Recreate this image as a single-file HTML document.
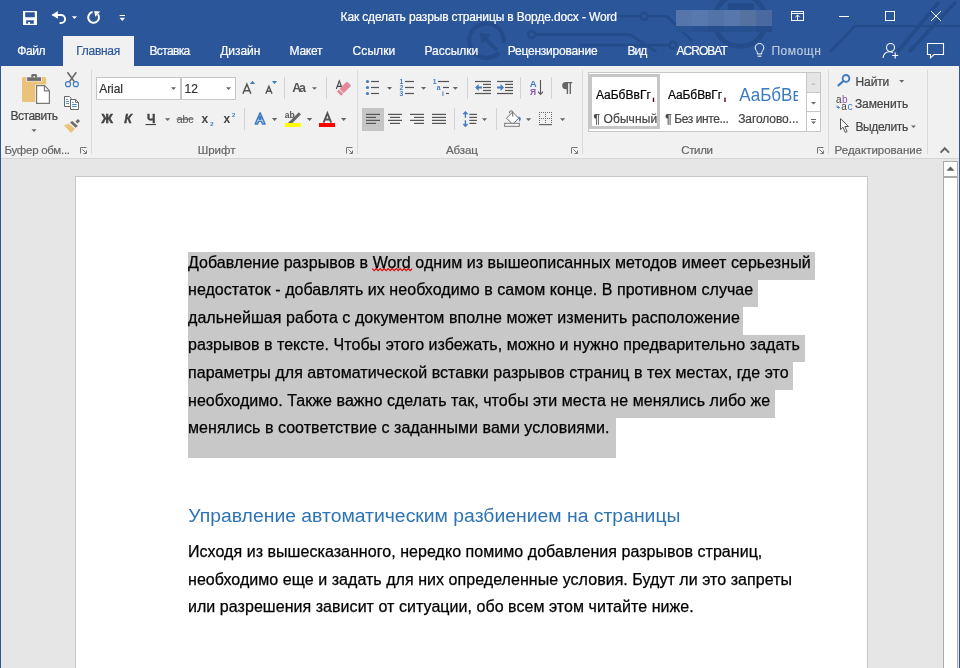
<!DOCTYPE html>
<html><head><meta charset="utf-8">
<style>
html,body{margin:0;padding:0;}
body{width:960px;height:668px;position:relative;overflow:hidden;background:#E6E6E6;font-family:"Liberation Sans",sans-serif;}
.a{position:absolute;}
#title{left:0;top:0;width:960px;height:66px;background:#2B579A;}
#ribbon{left:1px;top:66px;width:958px;height:92px;background:#F1F1F1;}
#rbb{left:1px;top:158px;width:958px;height:1px;background:#D5D5D5;}
#lb{left:0;top:66px;width:1px;height:602px;background:#2B579A;}
#rb{left:959px;top:66px;width:1px;height:602px;background:#2B579A;}
#page{left:75px;top:176px;width:791px;height:500px;background:#fff;border:1px solid #C6C6C6;}
.hl{position:absolute;background:#C8C8C8;left:188px;}
svg{position:absolute;left:0;top:0;will-change:transform;}
text{font-family:"Liberation Sans",sans-serif;white-space:pre;}
</style></head><body>
<div id="title" class="a"></div>
<div id="ribbon" class="a"></div>
<div id="rbb" class="a"></div>
<div id="lb" class="a"></div>
<div id="rb" class="a"></div>
<div id="page" class="a"></div>
<!-- scrollbar -->
<div class="a" style="left:943px;top:161px;width:13px;height:520px;background:#fff;border:1px solid #ABABAB;"></div>
<div class="a" style="left:944px;top:176px;width:13px;height:2px;background:#ABABAB;"></div>
<!-- highlights -->
<div class="hl" style="top:252px;width:627px;height:28px;"></div>
<div class="hl" style="top:280px;width:570px;height:27px;"></div>
<div class="hl" style="top:307px;width:555px;height:28px;"></div>
<div class="hl" style="top:335px;width:617px;height:27px;"></div>
<div class="hl" style="top:362px;width:605px;height:28px;"></div>
<div class="hl" style="top:390px;width:587px;height:28px;"></div>
<div class="hl" style="top:418px;width:428px;height:40px;"></div>
<!-- active tab -->
<div class="a" style="left:63px;top:36px;width:71px;height:30px;background:#F1F1F1;"></div>
<svg width="960" height="668" viewBox="0 0 960 668">
<g stroke="#254C8A" stroke-width="2.6" fill="none">
<path d="M617,16.3 H640.7 M647.7,16.3 H667 L692,41"/>
<circle cx="644.2" cy="16.3" r="3.5"/>
<path d="M535.2,34.6 H630 L656.3,51.7"/>
<circle cx="531.7" cy="34.6" r="3.5"/>
<path d="M579,45.1 H669.5"/>
<circle cx="673" cy="45.1" r="3.5"/>
<path d="M829.8,52 L854.8,26 H960"/>
</g>
<g stroke="#254C8A" stroke-width="3.6" fill="none">
<circle cx="740" cy="20.5" r="25.8" stroke-width="5"/>
<path d="M499,52.5 A17.2,17.2 0 1 1 503.5,43" stroke-width="4.2"/>
<path d="M897.5,52 L939,2 M909,52 L955.8,2"/>
<path d="M497,50 L485,38" stroke-width="4"/>
</g>
<path d="M479.5,32.5 L491,34.5 L481.5,44 Z" fill="#254C8A"/>
<rect x="728" y="3" width="26" height="9" fill="#254C8A"/>

<rect x="676" y="10" width="16" height="16" fill="#5676AB"/>
<rect x="692" y="10" width="16" height="16" fill="#5879B0"/>
<rect x="708" y="10" width="16" height="16" fill="#5273A7"/>
<rect x="724" y="10" width="16" height="16" fill="#5878AD"/>
<rect x="740" y="10" width="16" height="16" fill="#54719F"/>
<rect x="756" y="10" width="16" height="16" fill="#4B69A1"/>
<rect x="676" y="26" width="16" height="6" fill="#2A5392"/>
<rect x="692" y="26" width="16" height="6" fill="#295191"/>
<rect x="708" y="26" width="16" height="6" fill="#264E8D"/>
<rect x="724" y="26" width="16" height="6" fill="#26508F"/>
<rect x="740" y="26" width="16" height="6" fill="#27508E"/>
<rect x="756" y="26" width="16" height="6" fill="#254D8B"/>
<g fill="#fff">
<path d="M23,11 H37 V25 H23 Z M25.2,12.3 V17.3 H34.8 V12.3 Z M26.2,20.2 V23.8 H28.1 V22 H30 V23.8 H33.8 V20.2 Z" fill-rule="evenodd"/>
</g>
<path d="M52.6,14.9 H61 A4.1,4.1 0 0 1 61,23.1 H59.6" stroke="#fff" stroke-width="2" fill="none"/>
<path d="M51.6,14.9 L57.9,11.1 L57.9,18.7 Z" fill="#fff"/>

<path d="M71.9,16.2 L77.1,16.2 L74.5,18.9 Z" fill="#fff"/>
<path d="M92.6,12.1 A5.4,5.4 0 1 0 98.0,14.3" stroke="#fff" stroke-width="2" fill="none"/>
<path d="M94.2,11 L100.2,11.6 L95.3,16.8 Z" fill="#fff"/>
<rect x="119.6" y="15" width="5.4" height="1" fill="#fff"/><path d="M119.6,17.7 L125,17.7 L122.3,21 Z" fill="#fff"/>
<g stroke="#fff" stroke-width="1" fill="none">
<rect x="791.5" y="11.5" width="12" height="9"/>
<path d="M792,13.5 H803"/>
<path d="M797.5,15 V20.5 M795.3,17.2 L797.5,15 L799.7,17.2"/>
<path d="M839,16.5 H849"/>
<rect x="885.5" y="11.5" width="9" height="9"/>
<path d="M931,11 L941,21 M941,11 L931,21"/>
</g>
<g stroke="#fff" stroke-width="1.1" fill="none">
<circle cx="890.5" cy="47.5" r="4"/>
<path d="M883,58 C883.5,54 886,51.8 889.5,51.8 C891,51.8 892,52 893,52.6"/>
<path d="M895.2,52.5 V58.5 M892.2,55.5 H898.2"/>
<path d="M927.5,43.5 H943.5 V54.5 H934 L930.5,57.8 V54.5 H927.5 Z"/>
</g>
<g stroke="#fff" stroke-width="1" fill="none">
<path d="M757.3,54 V52.6 C757.3,51.2 755.2,49.8 755.2,47.8 A4.3,4.3 0 0 1 763.8,47.8 C763.8,49.8 761.7,51.2 761.7,52.6 V54 Z"/>
<path d="M757.6,56.2 H761.4"/>
</g>

<path d="M22,78.5 Q22,77 23.5,77 H26.3 V81.6 H41.8 V77 H44.6 Q46.1,77 46.1,78.5 V84.6 H35.2 V102 H23.5 Q22,102 22,100.5 Z" fill="#EAC27A"/>
<rect x="27.1" y="77.3" width="13.9" height="3.6" fill="#6D6D6D"/>
<path d="M31.3,77.4 V75.2 Q31.3,74 32.5,74 H35.7 Q36.9,74 36.9,75.2 V77.4 Z" fill="#6D6D6D"/>
<rect x="33.4" y="76" width="1.6" height="1.4" fill="#F1F1F1"/>
<path d="M36.6,85.7 H44.6 L49.4,90.7 V103.4 H36.6 Z" fill="#fff" stroke="#787878" stroke-width="1.2"/>
<path d="M44.4,85.8 V90.9 H49.3" fill="none" stroke="#787878" stroke-width="1.1"/>

<path d="M31.5,129.2 L36.5,129.2 L34.0,132 Z" fill="#666"/>

<path d="M67.5,72.3 L74.3,81.6 M76.3,72.3 L69.5,81.6" stroke="#666" stroke-width="1.6"/>
<circle cx="68" cy="84.2" r="2.5" fill="none" stroke="#3F7CC0" stroke-width="1.2"/>
<circle cx="75.8" cy="84.2" r="2.5" fill="none" stroke="#3F7CC0" stroke-width="1.2"/>


<path d="M64.5,96.5 H69.3 L71,98.2 V106.5 H64.5 Z" fill="#fff" stroke="#666" stroke-width="1"/>
<path d="M70.5,99.5 H75.6 L78.5,102.4 V109.5 H70.5 Z" fill="#fff" stroke="#666" stroke-width="1"/>
<path d="M75.6,99.6 V102.4 H78.4" fill="none" stroke="#666" stroke-width="1"/>
<path d="M66,99.4 H67.8 M66,101.4 H69 M66,103.4 H69 M72.1,102.4 H73.8 M72.1,104.5 H76.8 M72.1,106.5 H76.8" stroke="#3F7CC0" stroke-width="0.9"/>


<path d="M75.5,121.4 L77.9,118.9 L80.1,120.9 L77.4,123.5 Z" fill="#6A6A6A"/>
<path d="M70,122.4 L72.2,120.9 L77.9,126 L75.6,127.8 Z" fill="#6A6A6A"/>
<path d="M63.9,125.3 L68.7,123.7 L75,128.8 L71,132.9 Z" fill="#EAC27A"/>


<rect x="96.5" y="77.5" width="84" height="22" fill="#fff" stroke="#C6C6C6"/>
<rect x="181.5" y="77.5" width="54" height="22" fill="#fff" stroke="#C6C6C6"/>

<path d="M171,87.3 L176,87.3 L173.5,90 Z" fill="#666"/>
<path d="M226,87.3 L231,87.3 L228.5,90 Z" fill="#666"/>

<path d="M242.9,93.8 L246.9,84.3 L250.9,93.8 M244.4,90.7 H249.4" stroke="#555" stroke-width="1.5" fill="none"/>
<path d="M265.8,93.8 L268.9,86.4 L272,93.8 M267,91.2 H270.8" stroke="#555" stroke-width="1.4" fill="none"/>
<path d="M249.9,83.9 H255.1 L252.5,80.8 Z" fill="#3F7CC0"/>
<path d="M271.9,81 H277.1 L274.5,84 Z" fill="#3F7CC0"/>

<rect x="284" y="77" width="1" height="22" fill="#D4D4D4"/>
<rect x="326" y="77" width="1" height="22" fill="#D4D4D4"/>
<path d="M311.9,87.2 L317,87.2 L314.45,89.8 Z" fill="#666"/>

<path d="M336.3,89 L339.3,80.9 L342.3,89 M337.3,86.4 H341.3" stroke="#444" stroke-width="1.1" fill="none"/>
<g transform="translate(344,88.6) rotate(-45)">
<rect x="-7.2" y="-3.1" width="14.4" height="6.2" rx="1.2" fill="#E5899A"/>
<rect x="-4.2" y="-3.5" width="0.9" height="7" fill="#F1F1F1"/>
</g>

<rect x="145.5" y="124" width="10.5" height="1.1" fill="#444"/>
<path d="M165,118.3 L170.2,118.3 L167.6,121 Z" fill="#666"/>
<rect x="176.5" y="118.6" width="17" height="1" fill="#555"/>
<rect x="244" y="108" width="1" height="22" fill="#D4D4D4"/>

<path d="M255.2,124 L260.1,112.8 L265,124 L262.6,124 L261.5,121.2 L258.6,121.2 L257.5,124 Z M259.2,119.2 L261,119.2 L260.1,116.6 Z" fill="#fff" stroke="#3F7CC0" stroke-width="1.6" stroke-linejoin="round"/>

<path d="M271.9,117.9 L277.3,117.9 L274.6,121 Z" fill="#666"/>

<path d="M289.3,121.8 L298.8,112.3 L300.9,114.4 L291.4,123.9 Z" fill="#666"/>
<path d="M288.2,122.6 L289.6,121.2 L291,122.6 L289.6,124 Z" fill="#666"/>
<rect x="285" y="123" width="16" height="4" fill="#FFFF00"/>

<path d="M306.8,117.9 L312.3,117.9 L309.55,121 Z" fill="#666"/>

<path d="M323.6,122.6 L327.4,113.2 L331.2,122.6 M324.9,119.5 H329.9" stroke="#555" stroke-width="1.9" fill="none"/>
<rect x="319" y="123" width="16" height="4" fill="#FF0000"/>

<path d="M340.9,117.9 L346.4,117.9 L343.65,121 Z" fill="#666"/>
<path d="M80.5,153.5 V147.5 H86.5" stroke="#777" stroke-width="1" fill="none"/><path d="M82.5,149.5 L86,153 M86.5,150.5 V153.5 H83.5" stroke="#777" stroke-width="1" fill="none"/>
<path d="M346.5,153.5 V147.5 H352.5" stroke="#777" stroke-width="1" fill="none"/><path d="M348.5,149.5 L352,153 M352.5,150.5 V153.5 H349.5" stroke="#777" stroke-width="1" fill="none"/>
<path d="M571.5,153.5 V147.5 H577.5" stroke="#777" stroke-width="1" fill="none"/><path d="M573.5,149.5 L577,153 M577.5,150.5 V153.5 H574.5" stroke="#777" stroke-width="1" fill="none"/>
<path d="M817.5,153.5 V147.5 H823.5" stroke="#777" stroke-width="1" fill="none"/><path d="M819.5,149.5 L823,153 M823.5,150.5 V153.5 H820.5" stroke="#777" stroke-width="1" fill="none"/>
<circle cx="367.5" cy="81.5" r="1.6" fill="#3F7CC0"/>
<rect x="371" y="80.9" width="8" height="1.2" fill="#555"/>
<circle cx="367.5" cy="87.5" r="1.6" fill="#3F7CC0"/>
<rect x="371" y="86.9" width="8" height="1.2" fill="#555"/>
<circle cx="367.5" cy="93.5" r="1.6" fill="#3F7CC0"/>
<rect x="371" y="92.9" width="8" height="1.2" fill="#555"/>
<path d="M387,87 L392.1,87 L389.55,89.8 Z" fill="#666"/>
<rect x="405" y="80.9" width="9" height="1.2" fill="#555"/>
<rect x="405" y="86.9" width="9" height="1.2" fill="#555"/>
<rect x="405" y="92.9" width="9" height="1.2" fill="#555"/>
<path d="M421,87 L426.1,87 L423.55,89.8 Z" fill="#666"/>
<rect x="438" y="80.9" width="11" height="1.2" fill="#555"/>
<rect x="443" y="86.9" width="6" height="1.2" fill="#555"/>
<rect x="446" y="92.9" width="3" height="1.2" fill="#555"/>
<path d="M452.8,87 L457.9,87 L455.35,89.8 Z" fill="#666"/>
<rect x="467" y="77" width="1" height="22" fill="#D4D4D4"/>
<rect x="475" y="80.9" width="16" height="1.2" fill="#555"/>
<rect x="475" y="92.9" width="16" height="1.2" fill="#555"/>
<rect x="483" y="83.80000000000001" width="8" height="1.2" fill="#555"/>
<rect x="483" y="86.9" width="8" height="1.2" fill="#555"/>
<rect x="483" y="89.9" width="8" height="1.2" fill="#555"/>
<rect x="497" y="80.9" width="16" height="1.2" fill="#555"/>
<rect x="497" y="92.9" width="16" height="1.2" fill="#555"/>
<rect x="505" y="83.80000000000001" width="8" height="1.2" fill="#555"/>
<rect x="505" y="86.9" width="8" height="1.2" fill="#555"/>
<rect x="505" y="89.9" width="8" height="1.2" fill="#555"/>
<path d="M475.2,87.5 L478.6,84.1 V86.5 H481.9 V88.5 H478.6 V90.9 Z" fill="#3F7CC0"/>
<path d="M504,87.5 L500.6,84.1 V86.5 H497.1 V88.5 H500.6 V90.9 Z" fill="#3F7CC0"/>
<rect x="520" y="77" width="1" height="22" fill="#D4D4D4"/>
<path d="M540.5,80 V94.3 M538,91.7 L540.5,94.5 L543,91.7" stroke="#555" stroke-width="1.1" fill="none"/>
<rect x="551" y="77" width="1" height="22" fill="#D4D4D4"/>
<path d="M565.8,81.9 H572.3 V83.3 H571 V94 H569.6 V83.3 H568.1 V94 H566.7 V89.2 H565.8 A3.65,3.65 0 0 1 565.8,81.9 Z" fill="#666"/>
<rect x="362" y="108" width="22" height="23" fill="#C5C5C5"/>
<rect x="366" y="113.80000000000001" width="14" height="1.2" fill="#555"/><rect x="366" y="116.80000000000001" width="10" height="1.2" fill="#555"/><rect x="366" y="119.80000000000001" width="14" height="1.2" fill="#555"/><rect x="366" y="122.80000000000001" width="10" height="1.2" fill="#555"/>
<rect x="388" y="113.80000000000001" width="14" height="1.2" fill="#555"/><rect x="390" y="116.80000000000001" width="10" height="1.2" fill="#555"/><rect x="388" y="119.80000000000001" width="14" height="1.2" fill="#555"/><rect x="390" y="122.80000000000001" width="10" height="1.2" fill="#555"/>
<rect x="410" y="113.80000000000001" width="14" height="1.2" fill="#555"/><rect x="414" y="116.80000000000001" width="10" height="1.2" fill="#555"/><rect x="410" y="119.80000000000001" width="14" height="1.2" fill="#555"/><rect x="414" y="122.80000000000001" width="10" height="1.2" fill="#555"/>
<rect x="432" y="113.80000000000001" width="14" height="1.2" fill="#555"/><rect x="432" y="116.80000000000001" width="14" height="1.2" fill="#555"/><rect x="432" y="119.80000000000001" width="14" height="1.2" fill="#555"/><rect x="432" y="122.80000000000001" width="14" height="1.2" fill="#555"/>
<rect x="454" y="108" width="1" height="22" fill="#D4D4D4"/>
<path d="M465.4,112 V117.8 M465.4,120.2 V126" stroke="#3F7CC0" stroke-width="1.4"/>
<path d="M463,114 L465.4,111.2 L467.8,114 Z M463,124.2 L465.4,127 L467.8,124.2 Z" fill="#3F7CC0" stroke="#3F7CC0" stroke-width="0.6"/>
<rect x="469.3" y="113.80000000000001" width="7.6" height="1.2" fill="#555"/><rect x="469.3" y="116.80000000000001" width="7.6" height="1.2" fill="#555"/><rect x="469.3" y="119.80000000000001" width="7.6" height="1.2" fill="#555"/><rect x="469.3" y="122.80000000000001" width="7" height="1.2" fill="#555"/>
<path d="M481.9,118.3 L487.1,118.3 L484.5,121 Z" fill="#666"/>
<rect x="496" y="108" width="1" height="22" fill="#D4D4D4"/>

<path d="M506.5,118.2 L512.6,112.1 L518.7,118.2 L512.6,124.3 Z" fill="#fff" stroke="#666" stroke-width="1"/>
<path d="M509.6,113.2 V111.7 Q509.6,111 510.3,111 H512 Q512.7,111 512.7,111.7 V116.5" stroke="#666" stroke-width="1" fill="none"/>
<path d="M518.6,116.4 Q521,116.8 520.8,119.5 L519.5,121.8 Q518.8,120 518.9,118.4 Z" fill="#3F7CC0"/>
<rect x="504.7" y="123.3" width="14.6" height="3" fill="#fff" stroke="#777" stroke-width="1"/>

<path d="M525.9,118.3 L531.2,118.3 L528.55,121 Z" fill="#666"/>
<rect x="539.00" y="112.00" width="1" height="1" fill="#666"/><rect x="539.00" y="114.00" width="1" height="1" fill="#666"/><rect x="539.00" y="116.00" width="1" height="1" fill="#666"/><rect x="539.00" y="118.00" width="1" height="1" fill="#666"/><rect x="539.00" y="120.00" width="1" height="1" fill="#666"/><rect x="539.00" y="122.00" width="1" height="1" fill="#666"/><rect x="541.00" y="112.00" width="1" height="1" fill="#666"/><rect x="541.00" y="118.00" width="1" height="1" fill="#666"/><rect x="543.00" y="112.00" width="1" height="1" fill="#666"/><rect x="543.00" y="118.00" width="1" height="1" fill="#666"/><rect x="545.00" y="112.00" width="1" height="1" fill="#666"/><rect x="545.00" y="114.00" width="1" height="1" fill="#666"/><rect x="545.00" y="116.00" width="1" height="1" fill="#666"/><rect x="545.00" y="118.00" width="1" height="1" fill="#666"/><rect x="545.00" y="120.00" width="1" height="1" fill="#666"/><rect x="545.00" y="122.00" width="1" height="1" fill="#666"/><rect x="547.00" y="112.00" width="1" height="1" fill="#666"/><rect x="547.00" y="118.00" width="1" height="1" fill="#666"/><rect x="549.00" y="112.00" width="1" height="1" fill="#666"/><rect x="549.00" y="118.00" width="1" height="1" fill="#666"/><rect x="551.00" y="112.00" width="1" height="1" fill="#666"/><rect x="551.00" y="114.00" width="1" height="1" fill="#666"/><rect x="551.00" y="116.00" width="1" height="1" fill="#666"/><rect x="551.00" y="118.00" width="1" height="1" fill="#666"/><rect x="551.00" y="120.00" width="1" height="1" fill="#666"/><rect x="551.00" y="122.00" width="1" height="1" fill="#666"/>
<rect x="539" y="124" width="13" height="1.2" fill="#666"/>
<path d="M560,118.3 L565.2,118.3 L562.6,121 Z" fill="#666"/>

<rect x="588.5" y="72.5" width="232" height="59" fill="#fff" stroke="#C6C6C6"/>
<rect x="590.5" y="75.5" width="68" height="52" fill="none" stroke="#C6C6C6" stroke-width="3"/>
<rect x="806.5" y="72.5" width="14" height="20" fill="#E5E5E5" stroke="#C6C6C6"/>
<rect x="806.5" y="92.5" width="14" height="19" fill="#fff" stroke="#C6C6C6"/>
<rect x="806.5" y="111.5" width="14" height="20" fill="#fff" stroke="#C6C6C6"/>
<path d="M811,85 L813.5,82.5 L816,85 Z" fill="#C6C6C6"/>
<path d="M811,102 L816,102 L813.5,104.6 Z" fill="#666"/>
<rect x="811" y="119" width="5" height="1" fill="#666"/>
<path d="M811,121.5 L816,121.5 L813.5,124 Z" fill="#666"/>

<rect x="91" y="70" width="1" height="84" fill="#DADADA"/>
<rect x="357" y="70" width="1" height="84" fill="#DADADA"/>
<rect x="582" y="70" width="1" height="84" fill="#DADADA"/>
<rect x="828" y="70" width="1" height="84" fill="#DADADA"/>
<rect x="927" y="70" width="1" height="84" fill="#DADADA"/>

<circle cx="846" cy="78.4" r="3.4" fill="none" stroke="#3F7CC0" stroke-width="1.8"/>
<path d="M843.4,81 L838.5,85.4" stroke="#3F7CC0" stroke-width="2.2" stroke-linecap="round"/>
<path d="M840.5,118.6 V129.6 L843,127.2 L845.3,132.4 L847.1,131.6 L844.8,126.5 H848.5 Z" fill="#fff" stroke="#555" stroke-width="1" stroke-linejoin="round"/>
<path d="M837,105.5 L837,107.5 H839.6 M838,106.5 L839.6,107.5 L838,108.5" stroke="#3F7CC0" stroke-width="0.9" fill="none"/>

<path d="M899.2,80 L904.2,80 L901.7,82.7 Z" fill="#666"/>
<path d="M911,125.4 L916,125.4 L913.5,128 Z" fill="#666"/>
<path d="M940.6,152.6 L944.8,148.2 L949,152.6" stroke="#666" stroke-width="2" fill="none"/>
<path d="M946.5,170.8 L950.5,166.6 L954.5,170.8 Z" fill="#606060"/>
<polyline points="372.2,268.6 374.2,270.6 376.2,268.6 378.2,270.6 380.2,268.6 382.2,270.6 384.2,268.6 386.2,270.6 388.2,268.6 390.2,270.6 392.2,268.6 394.2,270.6 396.2,268.6 398.2,270.6 400.2,268.6 402.2,270.6 404.2,268.6 406.2,270.6 408.2,268.6 410.2,270.6 412.2,268.6" fill="none" stroke="#E00000" stroke-width="1.1"/>
<rect x="652.8" y="97.6" width="1.4" height="4.4" fill="#4A0A20"/><rect x="724.3" y="97.6" width="1.4" height="4.4" fill="#4A0A20"/>
<text x="340.60" y="21" font-size="12" fill="#FFFFFF" textLength="276.37" lengthAdjust="spacing" stroke="#FFFFFF" stroke-width="0.2">Как сделать разрыв страницы в Ворде.docx - Word</text>
<text x="17.20" y="55" font-size="12" fill="#FFFFFF" textLength="28.30" lengthAdjust="spacing" stroke="#FFFFFF" stroke-width="0.2">Файл</text>
<text x="149.40" y="55" font-size="12" fill="#FFFFFF" textLength="40.87" lengthAdjust="spacing" stroke="#FFFFFF" stroke-width="0.2">Вставка</text>
<text x="220.20" y="55" font-size="12" fill="#FFFFFF" textLength="40.23" lengthAdjust="spacing" stroke="#FFFFFF" stroke-width="0.2">Дизайн</text>
<text x="289.60" y="55" font-size="12" fill="#FFFFFF" textLength="32.80" lengthAdjust="spacing" stroke="#FFFFFF" stroke-width="0.2">Макет</text>
<text x="352.50" y="55" font-size="12" fill="#FFFFFF" textLength="42.80" lengthAdjust="spacing" stroke="#FFFFFF" stroke-width="0.2">Ссылки</text>
<text x="424.40" y="55" font-size="12" fill="#FFFFFF" textLength="53.80" lengthAdjust="spacing" stroke="#FFFFFF" stroke-width="0.2">Рассылки</text>
<text x="507.70" y="55" font-size="12" fill="#FFFFFF" textLength="89.87" lengthAdjust="spacing" stroke="#FFFFFF" stroke-width="0.2">Рецензирование</text>
<text x="627.50" y="55" font-size="12" fill="#FFFFFF" textLength="19.80" lengthAdjust="spacing" stroke="#FFFFFF" stroke-width="0.2">Вид</text>
<text x="676.50" y="55" font-size="12" fill="#FFFFFF" textLength="51.33" lengthAdjust="spacing" stroke="#FFFFFF" stroke-width="0.2">ACROBAT</text>
<text x="76.30" y="55" font-size="12" fill="#2B579A" textLength="43.90" lengthAdjust="spacing" stroke="#2B579A" stroke-width="0.2">Главная</text>
<text x="771.40" y="55" font-size="12" fill="#BAC8DE" textLength="49.43" lengthAdjust="spacing" stroke="#BAC8DE" stroke-width="0.2">Помощн</text>
<text x="4.50" y="154" font-size="11.5" fill="#666666" textLength="65.50" lengthAdjust="spacing" stroke="#666666" stroke-width="0.2">Буфер обм...</text>
<text x="197.70" y="154" font-size="11.5" fill="#666666" textLength="37.77" lengthAdjust="spacing" stroke="#666666" stroke-width="0.2">Шрифт</text>
<text x="446.00" y="154" font-size="11.5" fill="#666666" textLength="31.89" lengthAdjust="spacing" stroke="#666666" stroke-width="0.2">Абзац</text>
<text x="681.25" y="154" font-size="11.5" fill="#666666" textLength="31.67" lengthAdjust="spacing" stroke="#666666" stroke-width="0.2">Стили</text>
<text x="834.60" y="154" font-size="11.5" fill="#666666" textLength="87.50" lengthAdjust="spacing" stroke="#666666" stroke-width="0.2">Редактирование</text>
<text x="10.50" y="120" font-size="12" fill="#444444" textLength="47.45" lengthAdjust="spacing" stroke="#444444" stroke-width="0.2">Вставить</text>
<text x="99.20" y="93" font-size="12" fill="#333333" textLength="23.77" lengthAdjust="spacing" stroke="#333333" stroke-width="0.2">Arial</text>
<text x="184.60" y="93" font-size="12" fill="#333333" stroke="#333333" stroke-width="0.2">12</text>
<text x="855.50" y="86" font-size="12" fill="#444444" textLength="33.80" lengthAdjust="spacing" stroke="#444444" stroke-width="0.2">Найти</text>
<text x="854.90" y="108" font-size="12" fill="#444444" textLength="53.25" lengthAdjust="spacing" stroke="#444444" stroke-width="0.2">Заменить</text>
<text x="855.50" y="131" font-size="12" fill="#444444" textLength="52.65" lengthAdjust="spacing" stroke="#444444" stroke-width="0.2">Выделить</text>
<text x="595.90" y="99" font-size="12" fill="#000000" textLength="54.88" lengthAdjust="spacing" stroke="#000000" stroke-width="0.2">АаБбВвГг</text>
<text x="593.50" y="123" font-size="12" fill="#444444" textLength="63.60" lengthAdjust="spacing" stroke="#444444" stroke-width="0.2">¶ Обычный</text>
<text x="668.00" y="99" font-size="12" fill="#000000" textLength="54.08" lengthAdjust="spacing" stroke="#000000" stroke-width="0.2">АаБбВвГг</text>
<text x="665.20" y="123" font-size="12" fill="#444444" textLength="63.53" lengthAdjust="spacing" stroke="#444444" stroke-width="0.2">¶ Без инте...</text>
<text x="738.20" y="123" font-size="12" fill="#444444" textLength="60.33" lengthAdjust="spacing" stroke="#444444" stroke-width="0.2">Заголово...</text>
<text x="188.00" y="268" font-size="16" fill="#000000" textLength="622.61" lengthAdjust="spacing" stroke="#000" stroke-width="0.25">Добавление разрывов в Word одним из вышеописанных методов имеет серьезный</text>
<text x="188.00" y="295" font-size="16" fill="#000000" textLength="565.16" lengthAdjust="spacing" stroke="#000" stroke-width="0.25">недостаток - добавлять их необходимо в самом конце. В противном случае</text>
<text x="188.00" y="323" font-size="16" fill="#000000" textLength="551.87" lengthAdjust="spacing" stroke="#000" stroke-width="0.25">дальнейшая работа с документом вполне может изменить расположение</text>
<text x="188.00" y="350" font-size="16" fill="#000000" textLength="611.79" lengthAdjust="spacing" stroke="#000" stroke-width="0.25">разрывов в тексте. Чтобы этого избежать, можно и нужно предварительно задать</text>
<text x="188.00" y="378" font-size="16" fill="#000000" textLength="600.60" lengthAdjust="spacing" stroke="#000" stroke-width="0.25">параметры для автоматической вставки разрывов страниц в тех местах, где это</text>
<text x="188.00" y="406" font-size="16" fill="#000000" textLength="582.21" lengthAdjust="spacing" stroke="#000" stroke-width="0.25">необходимо. Также важно сделать так, чтобы эти места не менялись либо же</text>
<text x="188.00" y="433" font-size="16" fill="#000000" textLength="421.52" lengthAdjust="spacing" stroke="#000" stroke-width="0.25">менялись в соответствие с заданными вами условиями.</text>
<text x="188.00" y="557" font-size="16" fill="#000000" textLength="574.31" lengthAdjust="spacing" stroke="#000" stroke-width="0.25">Исходя из вышесказанного, нередко помимо добавления разрывов страниц,</text>
<text x="188.00" y="585" font-size="16" fill="#000000" textLength="604.00" lengthAdjust="spacing" stroke="#000" stroke-width="0.25">необходимо еще и задать для них определенные условия. Будут ли это запреты</text>
<text x="188.00" y="612" font-size="16" fill="#000000" textLength="505.68" lengthAdjust="spacing" stroke="#000" stroke-width="0.25">или разрешения зависит от ситуации, обо всем этом читайте ниже.</text>
<text x="188.30" y="522" font-size="17.6" fill="#2E74B5" textLength="492.15" lengthAdjust="spacingAndGlyphs">Управление автоматическим разбиением на страницы</text>
<text x="292.20" y="92.2" font-size="12.5" fill="#555" font-weight="bold" textLength="13.75" lengthAdjust="spacing">Aa</text>
<text x="101.60" y="123" font-size="12.5" fill="#444" font-weight="bold" textLength="10.90" lengthAdjust="spacing" stroke="#444" stroke-width="0.6">Ж</text>
<text x="124.30" y="123" font-size="12.5" fill="#444" font-weight="bold" font-style="italic" textLength="6.88" lengthAdjust="spacing" stroke="#444" stroke-width="0.4">К</text>
<text x="147.00" y="123" font-size="12" fill="#444" font-weight="bold" textLength="8.23" lengthAdjust="spacing" stroke="#444" stroke-width="0.4">Ч</text>
<text x="176.80" y="122.5" font-size="10.5" fill="#555" textLength="16.65" lengthAdjust="spacing">abc</text>
<text x="201.50" y="123" font-size="12" fill="#444" font-weight="bold" textLength="7.97" lengthAdjust="spacing">x</text>
<text x="210.20" y="126" font-size="6" fill="#3F7CC0" font-weight="bold" textLength="2.34" lengthAdjust="spacing">2</text>
<text x="223.50" y="123" font-size="12" fill="#444" font-weight="bold" textLength="7.97" lengthAdjust="spacing">x</text>
<text x="232.00" y="117" font-size="6" fill="#3F7CC0" font-weight="bold" textLength="2.34" lengthAdjust="spacing">2</text>
<text x="284.80" y="118.2" font-size="8.5" fill="#555" font-weight="bold">ab</text>
<text x="399.60" y="84" font-size="6.8" fill="#3F7CC0" font-weight="bold" textLength="3.08" lengthAdjust="spacing">1</text>
<text x="399.60" y="90" font-size="6.8" fill="#3F7CC0" font-weight="bold" textLength="3.08" lengthAdjust="spacing">2</text>
<text x="399.60" y="96" font-size="6.8" fill="#3F7CC0" font-weight="bold" textLength="3.08" lengthAdjust="spacing">3</text>
<text x="432.80" y="84" font-size="6.8" fill="#3F7CC0" font-weight="bold" textLength="2.48" lengthAdjust="spacing">1</text>
<text x="436.80" y="89.5" font-size="6.8" fill="#3F7CC0" font-weight="bold" textLength="3.08" lengthAdjust="spacing">a</text>
<text x="441.90" y="96" font-size="6.8" fill="#3F7CC0" font-weight="bold" textLength="1.09" lengthAdjust="spacing">i</text>
<text x="529.80" y="86.8" font-size="9.6" fill="#3F7CC0" font-weight="bold" textLength="6.23" lengthAdjust="spacing">A</text>
<text x="529.90" y="94.8" font-size="8.4" fill="#8E4FB4" font-weight="bold" textLength="5.12" lengthAdjust="spacing">Я</text>
<svg x="736" y="75" width="61.5" height="30" viewBox="736 75 61.5 30" overflow="hidden"><text x="739.20" y="100.5" font-size="18" fill="#3A7BC0" textLength="77.70" lengthAdjust="spacingAndGlyphs">АаБбВвГг</text></svg>
<text x="835.90" y="102.8" font-size="10" fill="#444" textLength="4.66" lengthAdjust="spacing">a</text>
<text x="842.00" y="102.8" font-size="10" fill="#8E4FB4" textLength="5.16" lengthAdjust="spacing">b</text>
<text x="841.30" y="109.8" font-size="10" fill="#444" textLength="4.96" lengthAdjust="spacing">a</text>
<text x="847.40" y="109.8" font-size="10.5" fill="#3F7CC0" textLength="4.95" lengthAdjust="spacing">c</text>
</svg>
</body></html>
